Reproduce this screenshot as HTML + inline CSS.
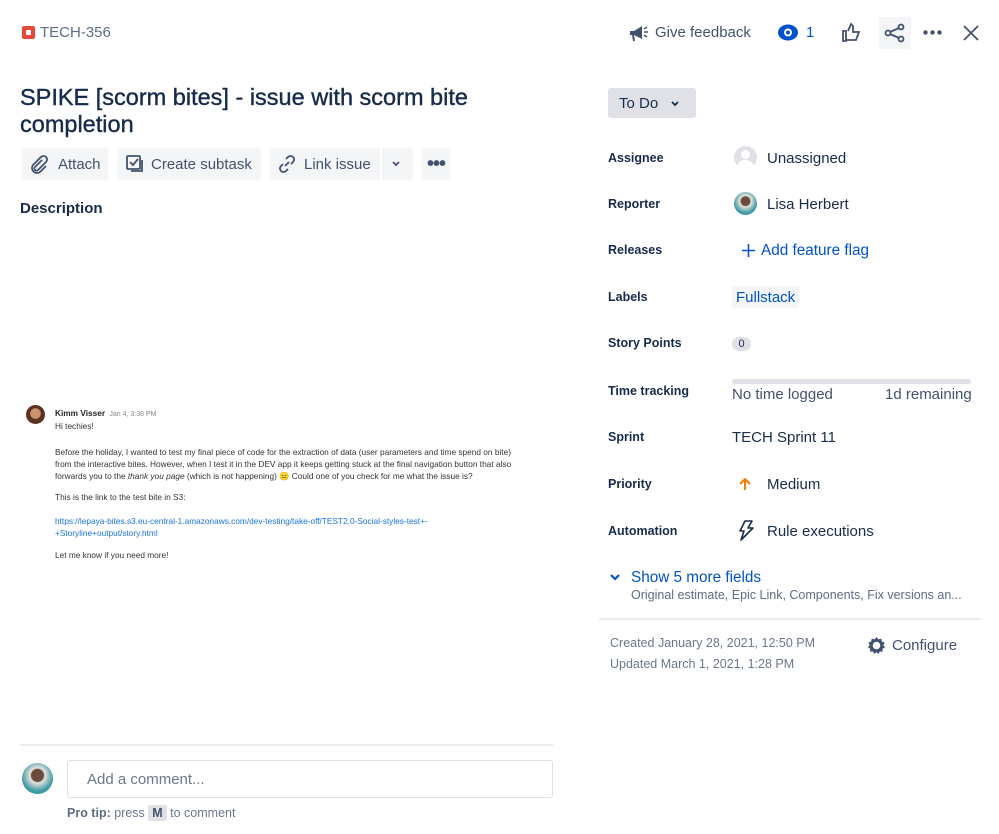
<!DOCTYPE html>
<html><head><meta charset="utf-8"><style>
*{margin:0;padding:0;box-sizing:border-box}
body{width:999px;height:834px;background:#fff;font-family:"Liberation Sans",sans-serif;color:#172b4d;position:relative;overflow:hidden}
.a{position:absolute;white-space:nowrap}
.btn{position:absolute;top:148px;height:32px;background:#f4f5f7;border-radius:3px;font-size:15px;color:#42526e;display:flex;align-items:center;padding-left:8px}
.lbl{position:absolute;left:608px;font-size:12.5px;font-weight:bold;color:#172b4d}
.val{position:absolute;font-size:15px;color:#172b4d;white-space:nowrap}
.c{position:absolute;left:55px;font-size:8.3px;color:#333;line-height:12px;white-space:nowrap}
</style></head><body>
<div class="a" style="left:22px;top:26px;width:13px;height:13px;background:#e5493a;border-radius:2px"><div style="position:absolute;left:4px;top:4px;width:5px;height:5px;background:#fff;border-radius:1px"></div></div>
<div class="a" style="left:40px;top:24px;font-size:15px;color:#5e6c84">TECH-356</div>
<div class="a" style="left:20px;top:84px;font-size:23.5px;line-height:27px;color:#172b4d;white-space:normal;width:470px;-webkit-text-stroke:0.4px #172b4d">SPIKE [scorm bites] - issue with scorm bite completion</div>

<div class="btn" style="left:21px;width:87px"><svg width="20" height="20" viewBox="0 0 20 20" fill="none" stroke="#42526e" stroke-width="1.8"><path d="M13 6l-7 7a2 2 0 003 3l8-8a3.5 3.5 0 00-5-5L4 11a5 5 0 007 7l6-6"/></svg><span style="margin-left:9px">Attach</span></div>
<div class="btn" style="left:117px;width:144px"><svg width="20" height="20" viewBox="0 0 20 20" fill="none" stroke="#42526e" stroke-width="1.8"><rect x="2" y="2" width="13" height="13" rx="1"/><path d="M5 8l3 3 5-6M17 6v11H6"/></svg><span style="margin-left:6px">Create subtask</span></div>
<div class="btn" style="left:269px;width:144px"><svg width="20" height="20" viewBox="0 0 20 20" fill="none" stroke="#42526e" stroke-width="1.8"><path d="M8 12l4-4M9 5l2-2a3.5 3.5 0 015 5l-2 2M11 15l-2 2a3.5 3.5 0 01-5-5l2-2"/></svg><span style="margin-left:7px">Link issue</span><div style="position:absolute;left:111px;top:0;width:2px;height:32px;background:#fff"></div><svg style="position:absolute;left:122px;top:12px" width="10" height="8" viewBox="0 0 10 8"><path d="M2 2l3 3 3-3" stroke="#42526e" stroke-width="1.8" fill="none"/></svg></div>
<div class="btn" style="left:421px;width:30px;padding-left:6px;font-size:20px;letter-spacing:-1px;font-weight:bold">•••</div>

<div class="a" style="left:20px;top:200px;font-size:15px;font-weight:bold">Description</div>

<div class="a" style="left:26px;top:405px;width:19px;height:19px;border-radius:50%;background:radial-gradient(circle at 50% 45%,#c9936f 35%,#5a3320 40%)"></div>
<div class="c" style="top:407px;font-weight:bold;color:#222">Kimm Visser <span style="font-weight:normal;color:#888;font-size:7px">&nbsp;Jan 4, 3:38 PM</span></div>
<div class="c" style="top:420px">Hi techies!</div>
<div class="c" style="top:446px">Before the holiday, I wanted to test my final piece of code for the extraction of data (user parameters and time spend on bite)<br>from the interactive bites. However, when I test it in the DEV app it keeps getting stuck at the final navigation button that also<br>forwards you to the <i>thank you page</i> (which is not happening) 😑 Could one of you check for me what the issue is?</div>
<div class="c" style="top:491px">This is the link to the test bite in S3:</div>
<div class="c" style="top:515px;color:#1a73e8">https://lepaya-bites.s3.eu-central-1.amazonaws.com/dev-testing/take-off/TEST2.0-Social-styles-test+-<br>+Storyline+output/story.html</div>
<div class="c" style="top:549px">Let me know if you need more!</div>

<div class="a" style="left:20px;top:744px;width:533px;height:2px;background:#ebecf0"></div>
<div class="a" style="left:22px;top:763px;width:31px;height:31px;border-radius:50%;background:radial-gradient(circle at 50% 40%,#6b4b3a 25%,#e8e4df 30%,#3f9aa3 65%)"></div>
<div class="a" style="left:67px;top:760px;width:486px;height:38px;border:1px solid #dfe1e6;border-radius:3px;font-size:15px;color:#6b778c;padding:10px 0 0 19px">Add a comment...</div>
<div class="a" style="left:67px;top:806px;font-size:12.5px;color:#6b778c"><b style="color:#5e6c84">Pro tip:</b> press <span style="background:#dfe1e6;padding:1px 4px;border-radius:2px;font-weight:bold;color:#42526e">M</span> to comment</div>

<svg class="a" style="left:629px;top:24px" width="20" height="19" viewBox="0 0 20 19"><path d="M1 7h4l8-5v13l-8-4H1z" fill="#42526e"/><path d="M4 11l1 6" stroke="#42526e" stroke-width="2"/><path d="M15 5l3-2M15 8h4M15 11l3 2" stroke="#42526e" stroke-width="1.5"/></svg>
<div class="a" style="left:655px;top:24px;font-size:15px;color:#42526e">Give feedback</div>
<svg class="a" style="left:778px;top:24px" width="20" height="17" viewBox="0 0 20 17"><ellipse cx="10" cy="8.5" rx="10" ry="8" fill="#0052cc"/><circle cx="10" cy="8.5" r="4" fill="#fff"/><circle cx="10" cy="8.5" r="2" fill="#0052cc"/></svg>
<div class="a" style="left:806px;top:24px;font-size:15px;color:#0052cc">1</div>
<svg class="a" style="left:842px;top:23px" width="19" height="19" viewBox="0 0 19 19" fill="none" stroke="#42526e" stroke-width="1.8"><path d="M1 8h3v10H1zM4 17h10l3-8h-6V3l-2-2-3 7"/></svg>
<div class="a" style="left:879px;top:17px;width:32px;height:32px;background:#f4f5f7;border-radius:3px"></div>
<svg class="a" style="left:884px;top:23px" width="22" height="20" viewBox="0 0 22 20" fill="none" stroke="#42526e" stroke-width="1.8"><circle cx="17" cy="4" r="2.5"/><circle cx="17" cy="16" r="2.5"/><circle cx="4" cy="10" r="2.5"/><path d="M6 9l9-4M6 11l9 4"/></svg>
<svg class="a" style="left:923px;top:30px" width="19" height="5" viewBox="0 0 19 5" fill="#42526e"><circle cx="2.5" cy="2.5" r="2.2"/><circle cx="9.5" cy="2.5" r="2.2"/><circle cx="16.5" cy="2.5" r="2.2"/></svg>
<svg class="a" style="left:963px;top:25px" width="16" height="16" viewBox="0 0 16 16"><path d="M1 1l14 14M15 1L1 15" stroke="#42526e" stroke-width="1.8"/></svg>

<div class="a" style="left:608px;top:88px;width:88px;height:30px;background:#dfe1e6;border-radius:3px;font-size:15px;color:#172b4d;padding:7px 0 0 11px">To Do <svg style="margin-left:8px" width="10" height="8" viewBox="0 0 10 8"><path d="M2 2l3 3 3-3" stroke="#172b4d" stroke-width="1.8" fill="none"/></svg></div>

<div class="lbl" style="top:151px">Assignee</div>
<div class="a" style="left:734px;top:146px;width:23px;height:23px;border-radius:50%;background:#dfe1e6;overflow:hidden"><div style="position:absolute;left:7px;top:4px;width:9px;height:9px;border-radius:50%;background:#fff"></div><div style="position:absolute;left:3px;top:14px;width:17px;height:14px;border-radius:50%;background:#fff"></div></div>
<div class="val" style="left:767px;top:150px">Unassigned</div>
<div class="lbl" style="top:197px">Reporter</div>
<div class="a" style="left:734px;top:192px;width:23px;height:23px;border-radius:50%;background:radial-gradient(circle at 50% 40%,#6b4b3a 25%,#e8e4df 30%,#3f9aa3 65%)"></div>
<div class="val" style="left:767px;top:196px">Lisa Herbert</div>
<div class="lbl" style="top:243px">Releases</div>
<svg class="a" style="left:742px;top:244px" width="13" height="13" viewBox="0 0 13 13"><path d="M6.5 0v13M0 6.5h13" stroke="#0052cc" stroke-width="1.6"/></svg>
<div class="val" style="left:761px;top:242px;color:#0052cc;font-size:15.3px">Add feature flag</div>
<div class="lbl" style="top:290px">Labels</div>
<div class="val" style="left:732px;top:286px;background:#f4f5f7;color:#0052cc;padding:3px 4px 2px">Fullstack</div>
<div class="lbl" style="top:336px">Story Points</div>
<div class="a" style="left:732px;top:337px;width:19px;height:14px;background:#dfe1e6;border-radius:7px;font-size:11px;text-align:center;line-height:14px;color:#172b4d">0</div>
<div class="lbl" style="top:384px">Time tracking</div>
<div class="a" style="left:732px;top:379px;width:239px;height:5px;background:#dfe1e6;border-radius:3px"></div>
<div class="val" style="left:732px;top:386px;color:#42526e">No time logged</div>
<div class="val" style="left:885px;top:386px;color:#42526e">1d remaining</div>
<div class="lbl" style="top:430px">Sprint</div>
<div class="val" style="left:732px;top:429px">TECH Sprint 11</div>
<div class="lbl" style="top:477px">Priority</div>
<svg class="a" style="left:739px;top:477px" width="12" height="14" viewBox="0 0 12 14"><path d="M6 13V2M1 7l5-5 5 5" stroke="#ff7a00" stroke-width="2" fill="none"/></svg>
<div class="val" style="left:767px;top:476px">Medium</div>
<div class="lbl" style="top:524px">Automation</div>
<svg class="a" style="left:738px;top:520px" width="16" height="21" viewBox="0 0 16 21"><path d="M7 1h7l-4 7h5L3 20l3-9H2z" stroke="#172b4d" stroke-width="1.6" fill="none" stroke-linejoin="round"/></svg>
<div class="val" style="left:767px;top:523px">Rule executions</div>

<svg class="a" style="left:609px;top:573px" width="12" height="9" viewBox="0 0 12 9"><path d="M2 2l4 4 4-4" stroke="#0052cc" stroke-width="2.2" fill="none"/></svg>
<div class="val" style="left:631px;top:569px;color:#0052cc;font-size:15.3px">Show 5 more fields</div>
<div class="a" style="left:631px;top:588px;font-size:12.5px;color:#5e6c84">Original estimate, Epic Link, Components, Fix versions an...</div>
<div class="a" style="left:599px;top:618px;width:382px;height:2px;background:#ebecf0"></div>
<div class="a" style="left:610px;top:633px;font-size:12.5px;color:#6b778c;line-height:21px">Created January 28, 2021, 12:50 PM<br>Updated March 1, 2021, 1:28 PM</div>
<svg class="a" style="left:867px;top:636px" width="19" height="19" viewBox="0 0 20 20"><path d="M10 1l2 2.5 3-.8.6 3.1 3 1-1.4 2.8L19 12l-2.8 1.5.3 3.1-3.1-.1L12 19l-2-2.2L7.6 19l-1.3-2.7-3.1.2.2-3.1L1 12l1.8-2.4-1.4-2.8 3-1L5 2.7l3 .8z" fill="#42526e"/><circle cx="10" cy="10" r="4" fill="#fff"/></svg>
<div class="val" style="left:892px;top:637px;color:#42526e">Configure</div>
</body></html>
